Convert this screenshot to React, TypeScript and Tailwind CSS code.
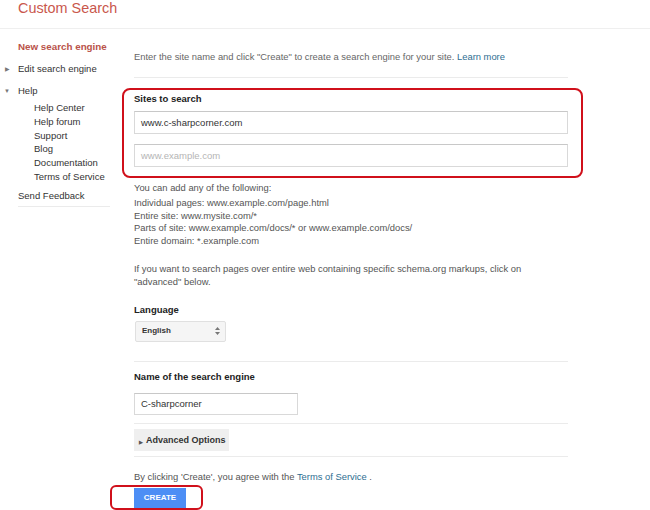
import React from "react";

const sideLinks = ["Help Center", "Help forum", "Support", "Blog", "Documentation", "Terms of Service"];

const examples = [
  "Individual pages: www.example.com/page.html",
  "Entire site: www.mysite.com/*",
  "Parts of site: www.example.com/docs/* or www.example.com/docs/",
  "Entire domain: *.example.com",
];

function Sidebar() {
  return (
    <aside className="w-[134px] shrink-0 pt-[11px] text-[9.5px] leading-[14px] text-[#333]">
      <div className="pl-[18px] text-[9.8px] font-bold text-[#b9524a]">New search engine</div>

      <div className="mt-[8px] flex items-center">
        <span className="w-[18px] pl-[5px] text-[6px] text-[#777]">▶</span>
        <span>Edit search engine</span>
      </div>

      <div className="mt-[8px] flex items-center">
        <span className="w-[18px] pl-[4px] text-[6px] text-[#777]">▼</span>
        <span>Help</span>
      </div>

      <ul className="mt-[3px] pl-[34px] leading-[13.8px]">
        {sideLinks.map((l) => (
          <li key={l}>{l}</li>
        ))}
      </ul>

      <div className="mt-[5px] ml-[18px] w-[92px] border-b border-[#ebebeb] pb-[3px]">Send Feedback</div>
    </aside>
  );
}

function Input({ value, placeholder, className }: { value?: string; placeholder?: string; className: string }) {
  return (
    <div
      className={
        "flex items-center border border-[#d9d9d9] border-t-[#c8c8c8] bg-white px-[6px] text-[9.5px] " +
        (value ? "text-[#333] " : "text-[#b5b5b5] ") +
        className
      }
    >
      {value ?? placeholder}
    </div>
  );
}

export default function App() {
  return (
    <div className="relative h-[510px] w-[650px] overflow-hidden bg-white font-['Liberation_Sans',Arial,sans-serif]">
      {/* Header */}
      <header className="h-[29px] border-b border-[#efefef] pl-[18px]">
        <h1 className="text-[14.4px] leading-[16px] text-[#c9574c]">Custom Search</h1>
      </header>

      <div className="flex">
        <Sidebar />

        {/* Main */}
        <main className="w-[434px] pt-[21px] text-[9.4px] leading-[14px] text-[#555]">
          <p className="text-[#666]">
            Enter the site name and click "Create" to create a search engine for your site.{" "}
            <span className="text-[#2e6e91]">Learn more</span>
          </p>

          <div className="mt-[13px] border-t border-[#ebebeb]" />

          {/* Sites to search */}
          <section className="relative mt-[14px]">
            <h2 className="text-[9.5px] font-bold text-[#222]">Sites to search</h2>
            <Input value="www.c-sharpcorner.com" className="mt-[5px] h-[23px] w-full" />
            <Input placeholder="www.example.com" className="mt-[10px] h-[23px] w-full" />
            <div className="pointer-events-none absolute -top-[4px] -bottom-[11px] -left-[12px] -right-[15px] rounded-[8px] border-2 border-[#d0101b]" />
          </section>

          <p className="mt-[14px]">You can add any of the following:</p>
          <ul className="mt-[2px] leading-[12.7px]">
            {examples.map((e) => (
              <li key={e}>{e}</li>
            ))}
          </ul>

          <p className="mt-[14px] leading-[13px]">
            If you want to search pages over entire web containing specific schema.org markups, click on
            <br />
            "advanced" below.
          </p>

          {/* Language */}
          <h2 className="mt-[15px] text-[9.5px] font-bold text-[#222]">Language</h2>
          <div className="ml-[1px] mt-[4px] flex h-[21px] w-[91px] items-center justify-between rounded-[2px] border border-[#e0e0e0] bg-[#f5f5f5] pl-[6px] pr-[5px]">
            <span className="text-[8px] font-bold text-[#333]">English</span>
            <svg width="5" height="8" viewBox="0 0 5 8" className="fill-[#777]">
              <path d="M2.5 0 L5 3 H0 Z" />
              <path d="M0 5 H5 L2.5 8 Z" />
            </svg>
          </div>

          <div className="mt-[19px] border-t border-[#ebebeb]" />

          {/* Name */}
          <h2 className="mt-[8px] text-[9.5px] font-bold text-[#222]">Name of the search engine</h2>
          <Input value="C-sharpcorner" className="mt-[9px] h-[22px] w-[164px]" />

          <div className="mt-[8px] border-t border-[#ebebeb]" />

          <div className="mt-[5px] flex h-[22px] w-[95px] items-center whitespace-nowrap bg-[#efefef] pl-[5px] text-[9px] font-bold text-[#333]">
            <span className="mr-[3px] mt-[4px] text-[5px] text-[#555]">▶</span>
            Advanced Options
          </div>

          <div className="mt-[5px] border-t border-[#ebebeb]" />

          <p className="mt-[13px]">
            By clicking 'Create', you agree with the <span className="text-[#2e6e91]">Terms of Service</span> .
          </p>

          <div className="relative mt-[4px] w-[52px]">
            <button className="flex h-[21px] w-[52px] items-center justify-center bg-[#4d8ef5] text-[8px] font-bold text-white">
              CREATE
            </button>
            <div className="pointer-events-none absolute -top-[3px] -bottom-[1px] -left-[24px] -right-[17px] rounded-[6px] border-2 border-[#d0101b]" />
          </div>
        </main>
      </div>
    </div>
  );
}
